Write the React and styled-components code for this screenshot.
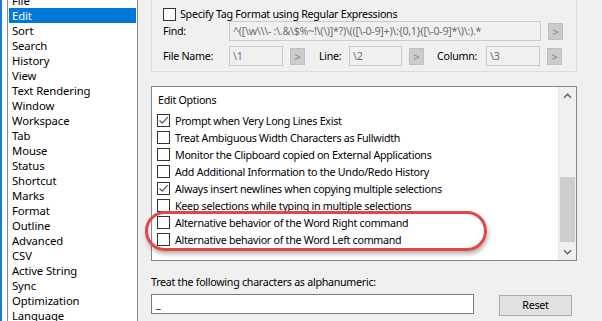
import React from "react";
import styled, { createGlobalStyle } from "styled-components";

const GlobalStyle = createGlobalStyle`
  html, body { margin: 0; padding: 0; background: #f0f0f0; }
  body {
    font-family: "Noto Sans", "Segoe UI", sans-serif;
    font-size: 10.7px;
    letter-spacing: -0.28px;
    color: #000;
  }
`;

const Window = styled.div`
  width: 602px;
  height: 321px;
  overflow: hidden;
  display: flex;
  box-sizing: border-box;
  background: #f0f0f0;
  border-left: 2px solid #1a7fd4;
`;

const Gutter = styled.div`
  width: 5px;
  flex: none;
  background: #fff;
`;

const CategoryList = styled.ul`
  list-style: none;
  margin: -9px 0 0;
  padding: 1px;
  width: 131px;
  height: 345px;
  flex: none;
  box-sizing: border-box;
  border: 1px solid #828790;
  background: #fff;
  font-size: 11.3px;
  letter-spacing: -0.1px;
`;

const Category = styled.li`
  height: 15px;
  line-height: 15px;
  padding-left: 3px;
  white-space: nowrap;
  background: ${(p) => (p.$selected ? "#0078d7" : "transparent")};
  color: ${(p) => (p.$selected ? "#fff" : "#000")};
`;

const Panel = styled.div`
  flex: 1;
  display: flex;
  flex-direction: column;
  padding: 0 25px 0 13px;
`;

const TagGroup = styled.div`
  margin-top: -12px;
  height: 84px;
  box-sizing: border-box;
  border: 1px solid #dcdcdc;
  padding: 18px 0 0 11px;
`;

const CheckRow = styled.div`
  display: flex;
  align-items: center;
  gap: 4px;
  height: 14px;
`;

const FieldRow = styled.div`
  display: flex;
  align-items: center;
  height: 20px;
  margin-top: ${(p) => p.$gap || 0}px;
`;

const FieldLabel = styled.span`
  width: ${(p) => p.$w}px;
  flex: none;
  white-space: nowrap;
  margin-left: ${(p) => p.$ml || 0}px;
`;

const DisabledInput = styled.div`
  width: ${(p) => p.$w}px;
  height: 20px;
  flex: none;
  box-sizing: border-box;
  border: 1px solid #cccccc;
  background: #f0f0f0;
  color: #6d6d6d;
  padding-left: 3px;
  line-height: 18px;
  white-space: nowrap;
  overflow: hidden;
`;

const ArrowButton = styled.div`
  width: 15px;
  height: 17px;
  flex: none;
  margin-left: 7px;
  box-sizing: border-box;
  border: 1px solid #bfbfbf;
  background: #cccccc;
  color: #838383;
  font-size: 11px;
  line-height: 15px;
  text-align: center;
`;

const OptionsList = styled.div`
  position: relative;
  margin-top: 14px;
  height: 175px;
  box-sizing: border-box;
  border: 1px solid #828790;
  background: #fff;
  display: flex;
`;

const OptionsBody = styled.div`
  flex: 1;
  padding: 4px 0 0 5px;
`;

const OptionsHeader = styled.div`
  height: 18px;
  line-height: 18px;
  padding-left: 1px;
  margin-bottom: 3px;
`;

const OptionRow = styled.div`
  display: flex;
  align-items: center;
  gap: 5px;
  height: 17px;
  white-space: nowrap;
`;

const Box = styled.span`
  width: 13px;
  height: 13px;
  flex: none;
  box-sizing: border-box;
  border: 1px solid #333;
  background: #fff;
  display: flex;
  align-items: center;
  justify-content: center;
`;

const Scrollbar = styled.div`
  width: 17px;
  flex: none;
  display: flex;
  flex-direction: column;
  background: #f0f0f0;
  border-left: 1px solid #e6e6e6;
`;

const ScrollArrow = styled.div`
  height: 17px;
  display: flex;
  align-items: center;
  justify-content: center;
`;

const ScrollTrack = styled.div`
  flex: 1;
  padding: 73px 1px 0;
`;

const Thumb = styled.div`
  height: 65px;
  background: #cdcdcd;
`;

const Highlight = styled.div`
  position: absolute;
  left: -7px;
  top: 124px;
  width: 342px;
  height: 40px;
  box-sizing: border-box;
  border: 3px solid #e24647;
  border-radius: 20px;
  box-shadow: 1px 3px 4px rgba(0, 0, 0, 0.3);
  pointer-events: none;
`;

const AlphaLabel = styled.div`
  margin-top: 13px;
  line-height: 16px;
`;

const AlphaRow = styled.div`
  display: flex;
  align-items: flex-start;
  margin-top: 4px;
`;

const AlphaInput = styled.div`
  width: 323px;
  height: 20px;
  box-sizing: border-box;
  border: 1px solid #7a7a7a;
  background: #fff;
  padding-left: 4px;
  line-height: 18px;
`;

const ResetButton = styled.div`
  width: 73px;
  height: 21px;
  margin: 1px 0 0 25px;
  box-sizing: border-box;
  border: 1px solid #adadad;
  background: #e1e1e1;
  line-height: 19px;
  text-align: center;
`;

const categories = [
  "File", "Edit", "Sort", "Search", "History", "View", "Text Rendering",
  "Window", "Workspace", "Tab", "Mouse", "Status", "Shortcut", "Marks",
  "Format", "Outline", "Advanced", "CSV", "Active String", "Sync",
  "Optimization", "Language",
];

const options = [
  ["Prompt when Very Long Lines Exist", true],
  ["Treat Ambiguous Width Characters as Fullwidth", false],
  ["Monitor the Clipboard copied on External Applications", false],
  ["Add Additional Information to the Undo/Redo History", false],
  ["Always insert newlines when copying multiple selections", true],
  ["Keep selections while typing in multiple selections", false],
  ["Alternative behavior of the Word Right command", false],
  ["Alternative behavior of the Word Left command", false],
];

function Check({ checked }) {
  return (
    <Box>
      {checked && (
        <svg width="11" height="11" viewBox="0 0 11 11">
          <path d="M1.5 5.5 L4.2 8.2 L9.8 2.2" fill="none" stroke="#555" strokeWidth="1.2" />
        </svg>
      )}
    </Box>
  );
}

function Chevron({ down }) {
  return (
    <svg width="9" height="6" viewBox="0 0 9 6">
      <path
        d={down ? "M1 1.2 L4.5 4.7 L8 1.2" : "M1 4.8 L4.5 1.3 L8 4.8"}
        fill="none"
        stroke="#606060"
        strokeWidth="1.5"
      />
    </svg>
  );
}

export default function App() {
  return (
    <>
      <GlobalStyle />
      <Window>
        <Gutter />
        <CategoryList>
          {categories.map((c) => (
            <Category key={c} $selected={c === "Edit"}>{c}</Category>
          ))}
        </CategoryList>

        <Panel>
          <TagGroup>
            <CheckRow>
              <Check />
              <span>Specify Tag Format using Regular Expressions</span>
            </CheckRow>
            <FieldRow>
              <FieldLabel $w={66}>Find:</FieldLabel>
              <DisabledInput $w={312}>^([\w\\\- :\.&amp;\$%~!\(\)]*?)\(([\-0-9]+)\:{"{0,1}"}([\-0-9]*\)\:).*</DisabledInput>
              <ArrowButton>&gt;</ArrowButton>
            </FieldRow>
            <FieldRow $gap={5}>
              <FieldLabel $w={66}>File Name:</FieldLabel>
              <DisabledInput $w={54}>\1</DisabledInput>
              <ArrowButton>&gt;</ArrowButton>
              <FieldLabel $w={30} $ml={14}>Line:</FieldLabel>
              <DisabledInput $w={53}>\2</DisabledInput>
              <ArrowButton>&gt;</ArrowButton>
              <FieldLabel $w={49} $ml={13}>Column:</FieldLabel>
              <DisabledInput $w={54}>\3</DisabledInput>
              <ArrowButton>&gt;</ArrowButton>
            </FieldRow>
          </TagGroup>

          <OptionsList>
            <OptionsBody>
              <OptionsHeader>Edit Options</OptionsHeader>
              {options.map(([label, checked]) => (
                <OptionRow key={label}>
                  <Check checked={checked} />
                  <span>{label}</span>
                </OptionRow>
              ))}
            </OptionsBody>
            <Scrollbar>
              <ScrollArrow><Chevron /></ScrollArrow>
              <ScrollTrack><Thumb /></ScrollTrack>
              <ScrollArrow><Chevron down /></ScrollArrow>
            </Scrollbar>
            <Highlight />
          </OptionsList>

          <AlphaLabel>Treat the following characters as alphanumeric:</AlphaLabel>
          <AlphaRow>
            <AlphaInput>_</AlphaInput>
            <ResetButton>Reset</ResetButton>
          </AlphaRow>
        </Panel>
      </Window>
    </>
  );
}
